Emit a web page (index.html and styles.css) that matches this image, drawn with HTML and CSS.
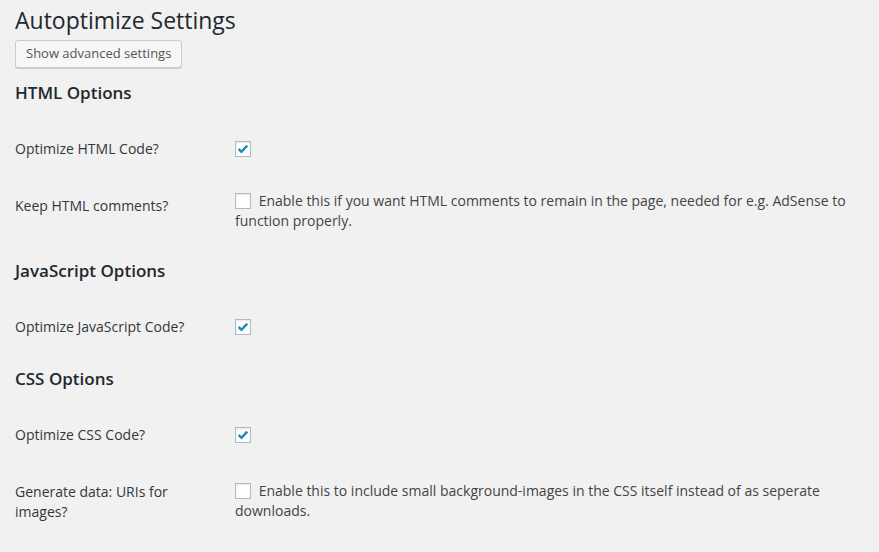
FILE: index.html
```html
<!DOCTYPE html>
<html lang="en">
<head>
    <meta charset="UTF-8">
    <title>Autoptimize Settings</title>
    <link rel="stylesheet" href="styles.css">
</head>
<body>
    <div class="wrap">
        <h1>Autoptimize Settings</h1>
        <button class="button" type="button">Show advanced settings</button>

        <!-- HTML -->
        <h2>HTML Options</h2>
        <table class="form-table">
            <tr class="row-short">
                <th>Optimize HTML Code?</th>
                <td><span class="check checked"><svg viewBox="0 0 16 16"><path d="M3 8 L6.3 11.2 L12.8 4.2" /></svg></span></td>
            </tr>
            <tr>
                <th>Keep HTML comments?</th>
                <td><span class="check"></span> Enable this if you want HTML comments to remain in the page, needed for e.g. AdSense to function properly.</td>
            </tr>
        </table>

        <!-- JS -->
        <h2>JavaScript Options</h2>
        <table class="form-table">
            <tr class="row-short">
                <th>Optimize JavaScript Code?</th>
                <td><span class="check checked"><svg viewBox="0 0 16 16"><path d="M3 8 L6.3 11.2 L12.8 4.2" /></svg></span></td>
            </tr>
        </table>

        <!-- CSS -->
        <h2>CSS Options</h2>
        <table class="form-table">
            <tr class="row-short">
                <th>Optimize CSS Code?</th>
                <td><span class="check checked"><svg viewBox="0 0 16 16"><path d="M3 8 L6.3 11.2 L12.8 4.2" /></svg></span></td>
            </tr>
            <tr>
                <th>Generate data: URIs for images?</th>
                <td><span class="check"></span> Enable this to include small background-images in the CSS itself instead of as seperate downloads.</td>
            </tr>
        </table>
    </div>
</body>
</html>
```

FILE: styles.css
```css
body {
    margin: 0;
    background-color: #f1f1f1;
    color: #444;
    font-family: "Open Sans", sans-serif;
    font-size: 14px;
}
.wrap {
    padding: 0 15px;
}
h1 {
    margin: 0;
    padding: 6px 0 4px;
    font-size: 23px;
    font-weight: 400;
    line-height: 29px;
    color: #23282d;
}
.button {
    display: block;
    height: 28px;
    margin-top: 1px;
    padding: 0 10px 2px;
    font-family: "Open Sans", sans-serif;
    font-size: 13px;
    line-height: 25px;
    color: #555;
    background: #f7f7f7;
    border: 1px solid #ccc;
    border-radius: 3px;
    box-shadow: 0 1px 0 #ccc;
}
h2 {
    margin: 14px 0 15px;
    font-size: 17px;
    font-weight: 600;
    line-height: 22px;
    color: #23282d;
}
.form-table {
    width: 100%;
    border-collapse: collapse;
}
.form-table th {
    width: 200px;
    padding: 20px 10px 17px 0;
    text-align: left;
    vertical-align: top;
    font-weight: 400;
    line-height: 20px;
    color: #32373c;
}
.form-table td {
    padding: 15px 10px;
    line-height: 20px;
    vertical-align: middle;
}
.row-short td {
    padding-top: 17px;
    padding-bottom: 14px;
}
.check {
    display: inline-block;
    box-sizing: border-box;
    width: 16px;
    height: 16px;
    margin-right: 4px;
    vertical-align: -3px;
    background: #fff;
    border: 1px solid #b4b9be;
    box-shadow: inset 0 1px 2px rgba(0, 0, 0, 0.1);
}
.check svg {
    display: block;
    width: 14px;
    height: 14px;
}
.check path {
    fill: none;
    stroke: #1e8cbe;
    stroke-width: 2.8;
}
```
